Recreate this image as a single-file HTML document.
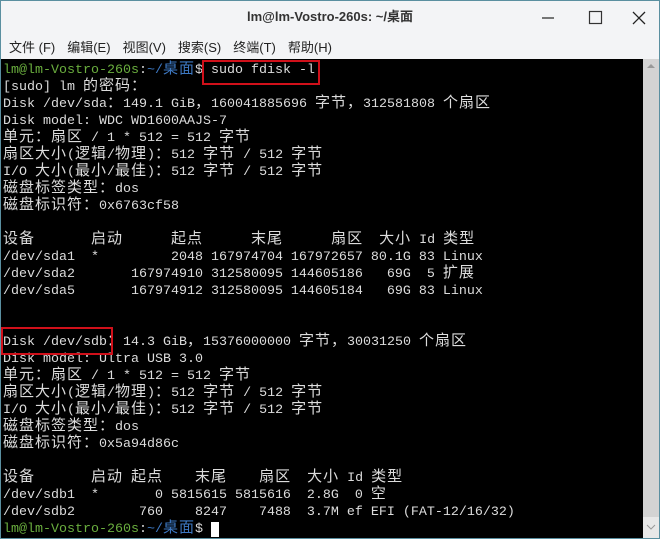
<!DOCTYPE html>
<html><head><meta charset="utf-8"><style>
html,body{margin:0;padding:0;width:660px;height:539px;overflow:hidden;background:#f3f4f6;}
#win{position:absolute;left:0;top:0;width:658px;height:537px;border:1px solid #5a8fa0;background:#f3f4f6;overflow:hidden;}
#title{position:absolute;left:0;top:0;width:658px;height:30px;text-align:center;font:bold 13px/32px "Liberation Sans","Noto Sans CJK SC",sans-serif;color:#333;}
#menu{position:absolute;left:8px;top:36px;height:20px;line-height:20px;font:13px "Liberation Sans","Noto Sans CJK SC",sans-serif;color:#222;white-space:nowrap;}
#menu span{margin-right:12px;}
#term{position:absolute;left:0;top:58px;width:642px;height:479px;background:#000;overflow:hidden;}
#sb{position:absolute;left:642px;top:58px;width:16px;height:479px;background:#d3d3d3;}
#txt{position:absolute;left:2px;top:3px;font:13.33px "Liberation Mono",monospace;color:#dcdcdc;}
#txt div{height:17px;line-height:17px;white-space:pre;overflow:visible;}
.c{font-family:"Noto Sans CJK SC",sans-serif;font-size:15px;letter-spacing:1px;line-height:0;}
.g{color:#6aae3e}.b{color:#3d78c2}
.box{position:absolute;border:2px solid #d0101a;}
</style></head><body><div id="win">
<div id="title">lm@lm-Vostro-260s: ~/桌面</div>
<svg style="position:absolute;left:540px;top:8px" width="110" height="18">
<line x1="1" y1="9" x2="13" y2="9" stroke="#222" stroke-width="1.2"/>
<rect x="48.5" y="2.5" width="12" height="12" fill="none" stroke="#333" stroke-width="1.2"/>
<path d="M92 3 L104 15 M104 3 L92 15" stroke="#222" stroke-width="1.3"/>
</svg>
<div id="menu"><span>文件 (F)</span><span>编辑(E)</span><span>视图(V)</span><span>搜索(S)</span><span>终端(T)</span><span>帮助(H)</span></div>
<div id="term"><div id="txt">
<div><span class="g">lm@lm-Vostro-260s</span>:<span class="b">~/<span class="c">桌面</span></span>$ sudo fdisk -l</div>
<div>[sudo] lm <span class="c">的密码：</span></div>
<div>Disk /dev/sda<span class="c">：</span>149.1 GiB<span class="c">，</span>160041885696 <span class="c">字节，</span>312581808 <span class="c">个扇区</span></div>
<div>Disk model: WDC WD1600AAJS-7</div>
<div><span class="c">单元：扇区</span> / 1 * 512 = 512 <span class="c">字节</span></div>
<div><span class="c">扇区大小</span>(<span class="c">逻辑</span>/<span class="c">物理</span>)<span class="c">：</span>512 <span class="c">字节</span> / 512 <span class="c">字节</span></div>
<div>I/O <span class="c">大小</span>(<span class="c">最小</span>/<span class="c">最佳</span>)<span class="c">：</span>512 <span class="c">字节</span> / 512 <span class="c">字节</span></div>
<div><span class="c">磁盘标签类型：</span>dos</div>
<div><span class="c">磁盘标识符：</span>0x6763cf58</div>
<div> </div>
<div><span class="c">设备</span>       <span class="c">启动</span>      <span class="c">起点</span>      <span class="c">末尾</span>      <span class="c">扇区</span>  <span class="c">大小</span> Id <span class="c">类型</span></div>
<div>/dev/sda1  *         2048 167974704 167972657 80.1G 83 Linux</div>
<div>/dev/sda2       167974910 312580095 144605186   69G  5 <span class="c">扩展</span></div>
<div>/dev/sda5       167974912 312580095 144605184   69G 83 Linux</div>
<div> </div>
<div> </div>
<div>Disk /dev/sdb<span class="c">：</span>14.3 GiB<span class="c">，</span>15376000000 <span class="c">字节，</span>30031250 <span class="c">个扇区</span></div>
<div>Disk model: Ultra USB 3.0</div>
<div><span class="c">单元：扇区</span> / 1 * 512 = 512 <span class="c">字节</span></div>
<div><span class="c">扇区大小</span>(<span class="c">逻辑</span>/<span class="c">物理</span>)<span class="c">：</span>512 <span class="c">字节</span> / 512 <span class="c">字节</span></div>
<div>I/O <span class="c">大小</span>(<span class="c">最小</span>/<span class="c">最佳</span>)<span class="c">：</span>512 <span class="c">字节</span> / 512 <span class="c">字节</span></div>
<div><span class="c">磁盘标签类型：</span>dos</div>
<div><span class="c">磁盘标识符：</span>0x5a94d86c</div>
<div> </div>
<div><span class="c">设备</span>       <span class="c">启动</span> <span class="c">起点</span>    <span class="c">末尾</span>    <span class="c">扇区</span>  <span class="c">大小</span> Id <span class="c">类型</span></div>
<div>/dev/sdb1  *       0 5815615 5815616  2.8G  0 <span class="c">空</span></div>
<div>/dev/sdb2        760    8247    7488  3.7M ef EFI (FAT-12/16/32)</div>
<div><span class="g">lm@lm-Vostro-260s</span>:<span class="b">~/<span class="c">桌面</span></span>$ <span style="background:#fff">&nbsp;</span></div>
</div></div>
<div id="sb"><svg width="16" height="479"><path d="M4 9 L8 5 L12 9 Z" fill="#999"/><rect x="0" y="458" width="16" height="21" fill="#e8e8e8"/><path d="M4 466 L8 470 L12 466" fill="none" stroke="#999"/></svg></div>
<div class="box" style="left:201px;top:59px;width:114px;height:21px"></div>
<div class="box" style="left:0px;top:326px;width:108px;height:24px"></div>
</div></body></html>
